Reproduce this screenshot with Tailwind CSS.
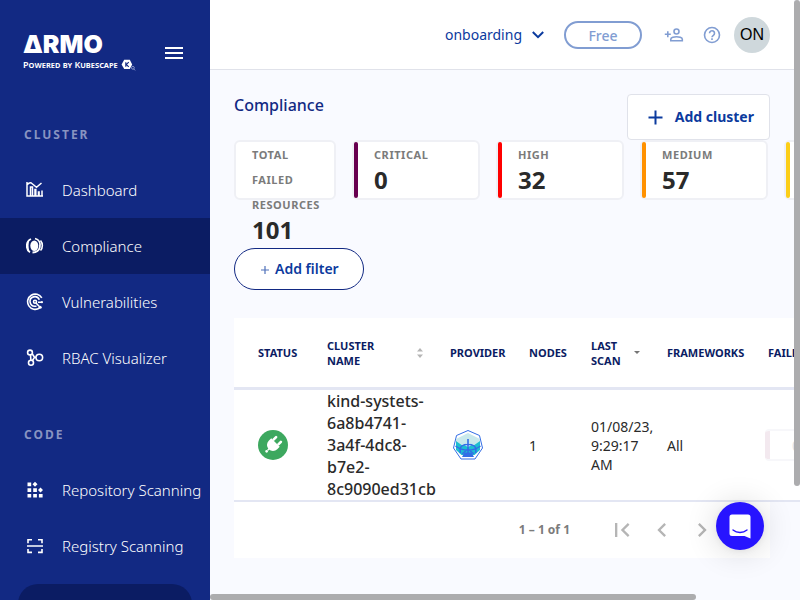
<!DOCTYPE html>
<html lang="en">
<head>
<meta charset="utf-8">
<meta name="viewport" content="width=device-width, initial-scale=1">
<title>Compliance</title>
<script src="https://cdn.jsdelivr.net/npm/@tailwindcss/browser@4"></script>
</head>
<body class="relative flex h-screen overflow-hidden bg-[#f9faff] font-['Noto_Sans',sans-serif] text-[#2a2a2a]">

<aside class="flex w-[210px] shrink-0 flex-col overflow-hidden bg-[#122983] text-white">
  <div class="flex items-start justify-between pt-8 pr-6 pl-[23px]">
    <a href="#" class="block whitespace-nowrap">
      <span class="block font-['Inter',sans-serif] text-[25px] leading-6 font-black">ΔRMO</span>
      <span class="flex items-center gap-[3px] pt-[3px]">
        <span class="text-[9px] leading-3 font-semibold [font-variant:small-caps]">Powered by Kubescape</span>
        <svg class="h-3 w-[15px]" viewBox="0 0 15 12" fill="none">
          <path d="M3.200.8h5.600L11.200 5.500 8.800 10H3.200L.6 5.500z" fill="#fff"/>
          <path d="M4.800 3.200v4.600M7.800 3.200 5.200 5.500l2.600 2.300" stroke="#122983" stroke-width="1.100"/>
          <circle cx="11.900" cy="8.800" r="1.400" stroke="#b9c2e6" stroke-width=".7"/>
          <path d="m12.800 10 1.300 1.400" stroke="#b9c2e6" stroke-width=".7"/>
        </svg>
      </span>
    </a>
    <button type="button" aria-label="Toggle menu" class="mt-[9px] flex size-6 items-center justify-center">
      <svg class="h-3 w-[18px]" viewBox="0 0 18 12" fill="#fff"><path d="M0 0h18v2H0zM0 5h18v2H0zM0 10h18v2H0z"/></svg>
    </button>
  </div>

  <nav class="mt-14 text-[15px] font-[350] whitespace-nowrap">
    <h2 class="px-6 text-xs leading-4 font-bold tracking-[2px] text-[#8894c1]">CLUSTER</h2>
    <ul class="mt-[19px]">
      <li><a href="#" class="flex h-14 items-center gap-[18px] pl-[26px]">
        <svg class="size-[18px]" viewBox="0 0 18 18" fill="none" stroke="#fff" stroke-width="1.500">
          <path d="M1 1v14h16M1.400 3.500Q3.500 1 5.300 2l5.200 4.300 5-4.300M4.500 14.500V6h2v8.500M9 14.500V8.500h.8v6M12.500 14.500v-3.500h.6v3.500M16 14.500V9.500"/>
        </svg>Dashboard</a></li>
      <li><a href="#" aria-current="page" class="flex h-14 items-center gap-[18px] bg-[#0b1c63] pl-[26px]">
        <svg class="size-[18px]" viewBox="0 0 18 18" fill="none">
          <path d="M5 2C2.300 3.200.8 5.800.8 8.800s1.200 5.300 3.200 6.500" stroke="#fff" stroke-width="1.800"/>
          <path d="M3.500 2.800C0 6 0 11.500 3.500 14.800 2.200 10.500 2.300 6.500 3.500 2.800z" fill="#fff"/>
          <ellipse cx="8.300" cy="8.800" rx="4" ry="5.300" fill="#fff"/>
          <path d="M9 1.500c4 1 5.800 4.500 4.800 8.800-.6 2.700-3 5-7.300 5.200" stroke="#fff" stroke-width="1.800"/>
          <path d="M14.500 3.500c2.400 2.700 2.500 7.300 0 10" stroke="#fff" stroke-width="1.600"/>
        </svg>Compliance</a></li>
      <li><a href="#" class="flex h-14 items-center gap-[18px] pl-[26px]">
        <svg class="size-[18px]" viewBox="0 0 18 18" fill="none" stroke="#fff" stroke-width="1.600">
          <path d="M15.800 4.900A7.600 7.600 0 1 0 13.500 15M13.300 6.700A4.800 4.800 0 1 0 9 13.300h1.500"/>
          <circle cx="9" cy="8.800" r="1.500"/>
          <path d="m10 10 3.600 3.700M12 9.200h3"/>
          <circle cx="15.900" cy="9.200" r="1.100" fill="#fff" stroke="none"/><circle cx="14.200" cy="14.200" r="1.500" fill="#fff" stroke="none"/>
        </svg>Vulnerabilities</a></li>
      <li><a href="#" class="flex h-14 items-center gap-[18px] pl-[26px]">
        <svg class="size-[18px]" viewBox="0 0 18 18" fill="none" stroke="#fff" stroke-width="1.600">
          <circle cx="4" cy="3.500" r="2.400"/><circle cx="5" cy="13.800" r="2.500"/><circle cx="13.300" cy="8.500" r="3.300"/>
          <path d="m4.500 6 .4 5.200M6.200 4.800l2.300 3.500L6.500 11.500M8.500 8.400H10"/>
        </svg>RBAC Visualizer</a></li>
    </ul>
    <h2 class="mt-[41px] px-6 text-xs leading-4 font-bold tracking-[2px] text-[#8894c1]">CODE</h2>
    <ul class="mt-[19px]">
      <li><a href="#" class="flex h-14 items-center gap-[18px] pl-[26px]">
        <svg class="size-[18px]" viewBox="0 0 18 18" fill="#fff">
          <path d="M1.500 1.500h3.700v3.700H1.500zM1.500 7.200h3.700v3.700H1.500zM7.200 7.200h3.700v3.700H7.200zM1.500 12.900h3.700v3.700H1.500zM7.200 12.900h3.700v3.700H7.200zM12.900 12.900h3.700v3.700h-3.700zM9 .8l2.500 2.500L9 5.800 6.500 3.300zM14.500 6.500 17 9l-2.500 2.500L12 9z"/>
        </svg>Repository Scanning</a></li>
      <li><a href="#" class="flex h-14 items-center gap-[18px] pl-[26px]">
        <svg class="size-[18px]" viewBox="0 0 18 18" fill="none" stroke="#fff" stroke-width="1.600">
          <path d="M2 6.200V2.800h4M12 2.800h4v3.400M2 12v3.400h4M12 15.400h4V12M1 9h16"/>
        </svg>Registry Scanning</a></li>
    </ul>
  </nav>
  <div class="mx-[18px] mt-[10px] h-40 shrink-0 rounded-[20px] bg-[#0b1c63]"></div>
</aside>

<div class="min-w-0 flex-1 overflow-hidden pr-[6px]">
  <header class="flex h-[70px] items-center justify-end border-b border-[#e0e2ea] bg-white pr-6">
    <button type="button" class="flex items-center gap-[10px] text-sm text-[#0b3a9e]">onboarding
      <svg class="h-2 w-3" viewBox="0 0 12 8" fill="none" stroke="#0b3a9e" stroke-width="2"><path d="m.8 1 5.200 5.200L11.200 1"/></svg>
    </button>
    <button type="button" class="ml-5 h-7 w-[78px] rounded-full border-2 border-[#819dd2] text-sm leading-[26px] font-medium text-[#819dd2]">Free</button>
    <button type="button" aria-label="Invite user" class="ml-[22px]">
      <svg class="size-5" viewBox="0 0 20 20" fill="none" stroke="#819dd2" stroke-width="1.600">
        <circle cx="12.500" cy="6.500" r="2.500"/><path d="M6.800 15.700v-1.500c0-1.600 3.600-2.500 5.700-2.500s5.800.9 5.800 2.500v1.500zM3.800 6.300v6M.8 9.300h6"/>
      </svg>
    </button>
    <button type="button" aria-label="Help" class="ml-[18px]">
      <svg class="size-5" viewBox="0 0 20 20" fill="none" stroke="#819dd2" stroke-width="1.600">
        <circle cx="10" cy="10" r="7.500"/><path d="M7.500 8.300a2.500 2.500 0 1 1 3.900 2c-.9.600-1.400 1-1.400 2M10 13.200v1.700"/>
      </svg>
    </button>
    <button type="button" class="ml-3 size-9 rounded-full bg-[#cfd8dc] font-['Liberation_Sans',sans-serif] text-base text-black">ON</button>
  </header>

  <main class="p-6 pb-0">
    <div class="flex items-start justify-between">
      <h1 class="text-base leading-[22px] font-medium text-[#122983]">Compliance</h1>
      <button type="button" class="flex h-[46px] items-center gap-3 rounded border border-[#e0e2ea] bg-white pr-[15px] pl-5 text-sm font-bold text-[#0b3a9e]">
        <svg class="size-[15px]" viewBox="0 0 15 15" fill="#0b3a9e"><path d="M6.500.5h2v6h6v2h-6v6h-2v-6h-6v-2h6z"/></svg>
        Add cluster
      </button>
    </div>

    <section aria-label="Failed resources" class="flex h-[60px] gap-4 text-[11px] leading-[25px] font-bold tracking-wider text-[#7b7b7b]">
      <div class="w-[102px] shrink-0 rounded-md border-2 border-[#eff0f5] bg-white pl-4">
        <p class="w-16">TOTAL FAILED RESOURCES</p>
        <p class="text-2xl leading-[25px] tracking-normal text-[#2a2a2a]">101</p>
      </div>
      <div class="flex w-32 shrink-0 gap-4 rounded-md border-2 border-[#eff0f5] bg-white">
        <div class="w-1 rounded-xs bg-[#68004f]"></div>
        <div><p>CRITICAL</p><p class="text-2xl leading-[25px] tracking-normal text-[#2a2a2a]">0</p></div>
      </div>
      <div class="flex w-32 shrink-0 gap-4 rounded-md border-2 border-[#eff0f5] bg-white">
        <div class="w-1 rounded-xs bg-[#ff0000]"></div>
        <div><p>HIGH</p><p class="text-2xl leading-[25px] tracking-normal text-[#2a2a2a]">32</p></div>
      </div>
      <div class="flex w-32 shrink-0 gap-4 rounded-md border-2 border-[#eff0f5] bg-white">
        <div class="w-1 rounded-xs bg-[#ff9100]"></div>
        <div><p>MEDIUM</p><p class="text-2xl leading-[25px] tracking-normal text-[#2a2a2a]">57</p></div>
      </div>
      <div class="flex w-32 shrink-0 rounded-md border-2 border-[#eff0f5] bg-white">
        <div class="w-1 rounded-xs bg-[#fcce18]"></div>
      </div>
    </section>

    <button type="button" class="mt-12 flex h-[42px] items-center gap-1 rounded-full border border-[#122983] bg-white px-6 text-sm font-semibold text-[#0b3a9e]"><svg class="mx-[2px] mt-[2px] size-2" viewBox="0 0 8 8" stroke="#4f71ba" stroke-width="1.200"><path d="M4 0v8M0 4h8"/></svg>Add filter</button>

    <table class="mt-7 w-[680px] table-fixed border-separate border-spacing-0 bg-white text-left">
      <colgroup>
        <col class="w-[81px]"><col class="w-[123px]"><col class="w-[79px]"><col class="w-[62px]"><col class="w-[76px]"><col class="w-[101px]"><col>
      </colgroup>
      <thead class="text-[11px] leading-[15px] text-[#0b1c63]">
        <tr class="h-[72px] *:border-b-3 *:border-[#e3e6f3]">
          <th class="pr-3 pl-6">STATUS</th>
          <th class="pr-[15px] pl-3"><div class="flex items-center justify-between"><span class="w-14">CLUSTER NAME</span>
            <svg class="h-[10px] w-[6px]" viewBox="0 0 6 10" fill="#b5b5b5"><path d="M0 3.500h6L3 0zM0 6.500h6L3 10z"/></svg></div></th>
          <th class="px-3">PROVIDER</th>
          <th class="px-3">NODES</th>
          <th class="pr-[15px] pl-3"><div class="flex items-center justify-between"><span class="w-8">LAST SCAN</span>
            <svg class="h-[3px] w-[6px]" viewBox="0 0 6 3" fill="#757575"><path d="M0 0h6L3 3z"/></svg></div></th>
          <th class="px-3">FRAMEWORKS</th>
          <th class="px-3 whitespace-nowrap">FAILED RESOURCES</th>
        </tr>
      </thead>
      <tbody class="text-sm leading-[19px]">
        <tr class="*:border-b-2 *:border-[#e3e6f3]">
          <td class="pl-6">
            <svg class="size-[30px]" viewBox="0 0 30 30" role="img" aria-label="Connected">
              <circle cx="15" cy="15" r="15" fill="#3da85f"/>
              <g transform="rotate(45 15 15)" fill="#fff"><path d="M9 11.500h12v3.500a6 6 0 0 1-12 0z"/><rect x="10.300" y="6" width="2.600" height="6" rx="1.200"/><rect x="17.100" y="6" width="2.600" height="6" rx="1.200"/><path d="M14.200 20h1.600v2.500h-1.600z"/><circle cx="15" cy="24" r="1.400"/></g>
            </svg>
          </td>
          <td class="pl-3 text-base leading-[22px] font-medium">kind-systets-6a8b4741-3a4f-4dc8-b7e2-8c9090ed31cb</td>
          <td class="pl-[14px]">
            <svg class="size-8" viewBox="0 0 32 32" role="img" aria-label="Kubernetes">
              <path d="M16 1.500 27.500 6.500l3 12.500-7.500 11H9L1.500 19l3-12.500z" fill="#fff" stroke="#326de6"/>
              <path d="M4 11.500 16 18l12-6.500V21l-5.500 5h-13L4 21z" fill="#1dbfd0"/>
              <path d="M4 10 16 4l12 6v2L21 17l-5-3.500-5 3.500-7-5z" fill="#c9e9ec"/>
              <g stroke="#326de6" fill="none"><path d="M16 10v17" stroke-width="1.600"/><path d="M8.500 24c-2-8 4-8.500 7.500-8.500s9.500.5 7.500 8.500" stroke-width="1.500"/><path d="M3.500 17c7 5.500 18 5.500 25 0M16 20l-6 5M16 20l6 5" stroke-width="1.400"/></g>
              <path d="M12.500 23.500h7L22 28H10z" fill="#326de6"/>
            </svg>
          </td>
          <td class="pl-3">1</td>
          <td class="pl-3">01/08/23, 9:29:17 AM</td>
          <td class="pl-3">All</td>
          <td class="pl-[9px]">
            <div class="flex h-8 w-[72px] items-center gap-[22px] overflow-hidden rounded border-2 border-l-0 border-[#f7f7fa] text-[#e0e0e0]"><span class="h-8 w-[5px] bg-[#f3e9ef]"></span>0</div>
          </td>
        </tr>
      </tbody>
    </table>
    <div class="flex h-14 items-center justify-end bg-white pr-2 text-[#b5b5b5]">
      <span class="mr-8 text-xs font-bold text-[#7b7b7b]">1 – 1 of 1</span>
      <button type="button" disabled aria-label="First page" class="size-10"><svg class="mx-auto size-7" viewBox="0 0 24 24" fill="currentColor"><path d="M18.400 16.600 13.800 12l4.600-4.600L17 6l-6 6 6 6zM6 6h2v12H6z"/></svg></button>
      <button type="button" disabled aria-label="Previous page" class="size-10"><svg class="mx-auto size-7" viewBox="0 0 24 24" fill="currentColor"><path d="M15.400 7.400 14 6l-6 6 6 6 1.400-1.400L10.800 12z"/></svg></button>
      <button type="button" disabled aria-label="Next page" class="size-10"><svg class="mx-auto size-7" viewBox="0 0 24 24" fill="currentColor"><path d="M10 6 8.600 7.400l4.600 4.600-4.600 4.600L10 18l6-6z"/></svg></button>
      <button type="button" disabled aria-label="Last page" class="size-10"><svg class="mx-auto size-7" viewBox="0 0 24 24" fill="currentColor"><path d="M5.600 7.400 10.200 12l-4.600 4.600L7 18l6-6-6-6zM16 6h2v12h-2z"/></svg></button>
    </div>
  </main>
</div>

<!-- Scroll thumbs and chat launcher float over the page -->
<div class="absolute top-0 right-0 h-[81%] w-[6px] rounded-full bg-[#acacae]"></div>
<div class="absolute bottom-0 left-[210px] h-[6px] w-[486px] rounded-full bg-[#acacae]"></div>
<button type="button" aria-label="Open chat" class="absolute right-9 bottom-[50px] flex size-12 items-center justify-center rounded-full bg-[#2714ff] shadow-[0_1px_6px_rgba(0,0,0,0.06),0_2px_32px_rgba(0,0,0,0.16)]">
  <svg class="h-[25px] w-[22px]" viewBox="0 0 22 25"><path d="M3 .5h16a2.500 2.500 0 0 1 2.500 2.500v21.500l-6-2.500H3A2.500 2.500 0 0 1 .5 19.500V3A2.500 2.500 0 0 1 3 .5z" fill="#fff"/><path d="M4 16c4 3.300 10 3.300 14 0" fill="none" stroke="#2714ff" stroke-width="1.400" stroke-linecap="round"/></svg>
</button>
</body>
</html>
